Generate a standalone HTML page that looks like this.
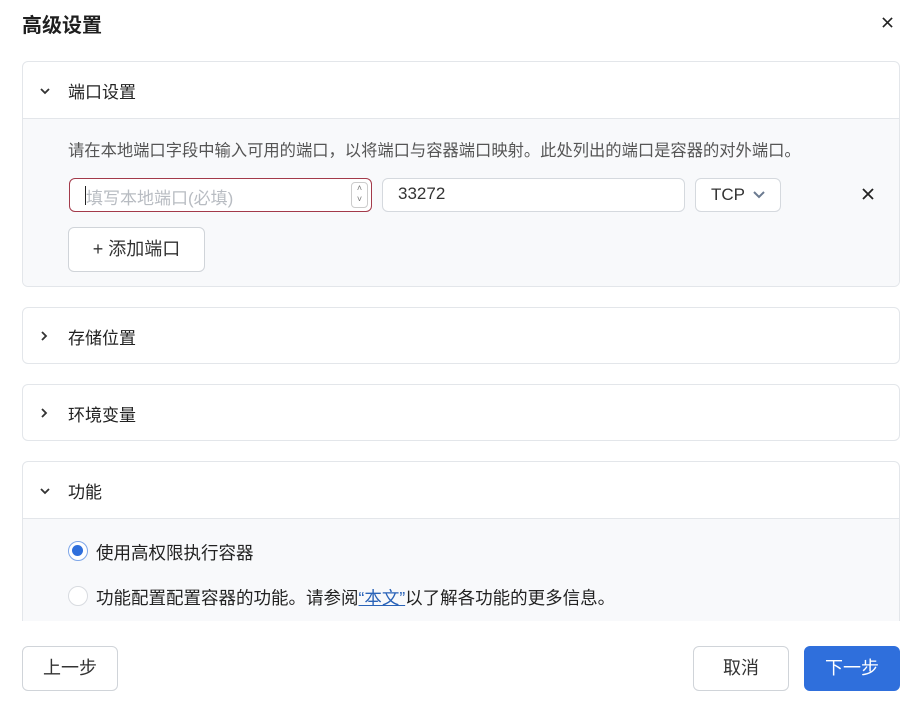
<!DOCTYPE html>
<html><head><meta charset="utf-8"><style>
*{box-sizing:border-box;margin:0;padding:0}
body{width:911px;height:704px;background:#fff;font-family:"Liberation Sans","Noto Sans CJK SC",sans-serif;color:#222;position:relative;overflow:hidden}
.abs{position:absolute}
.title{left:22px;top:9px;font-size:20px;font-weight:bold;color:#1f1f1f}
.panel{position:absolute;left:22px;width:878px;border:1px solid #e3e6ea;border-radius:6px;background:#fff;overflow:hidden}
.hd{height:56px;position:relative;font-size:17px}
.hd span{position:absolute;left:45px;top:16px}
.hd svg{position:absolute;left:16px;top:24px}
.bd{background:#f8f9fb;border-top:1px solid #e3e6ea;position:relative}
.inp{position:absolute;border:1px solid #d5d9de;border-radius:6px;background:#fff;height:34px;font-size:17px}
.btn{position:absolute;border:1px solid #d0d4d9;border-radius:6px;background:#fff;font-size:18px;text-align:center;line-height:42px;height:45px;color:#333}
</style></head><body>
<div class="abs title">高级设置</div>
<svg class="abs" style="left:882px;top:17px" width="11" height="11" viewBox="0 0 12 12"><path d="M1 1L11 11M11 1L1 11" stroke="#222" stroke-width="1.8"/></svg>

<div class="panel" style="top:61px;height:226px">
 <div class="hd"><svg width="12" height="10" viewBox="0 0 12 10"><path d="M2 3L6 7L10 3" fill="none" stroke="#333" stroke-width="1.8"/></svg><span>端口设置</span></div>
 <div class="bd" style="height:170px">
  <div class="abs" style="left:45px;top:18px;font-size:16.3px;color:#555;white-space:nowrap">请在本地端口字段中输入可用的端口，以将端口与容器端口映射。此处列出的端口是容器的对外端口。</div>
  <div class="inp" style="left:46px;top:59px;width:303px;border-color:#a33a4a;color:#b8bcc2;padding:5px 0 0 16px">填写本地端口(必填)
   <div class="abs" style="left:15px;top:7px;width:1px;height:19px;background:#222"></div>
   <div class="abs" style="right:3px;top:3px;width:17px;height:26px;border:1px solid #ccc;border-radius:4px;font-size:9px;line-height:11px;text-align:center;color:#777">˄<br>˅</div>
  </div>
  <div class="inp" style="left:359px;top:59px;width:303px;padding:5px 0 0 15px;color:#333">33272</div>
  <div class="inp" style="left:672px;top:59px;width:86px;padding:6px 0 0 15px;color:#333">TCP
   <svg class="abs" style="left:56px;top:11px" width="14" height="10" viewBox="0 0 14 10"><path d="M2 2L7 7L12 2" fill="none" stroke="#6b7a90" stroke-width="2"/></svg></div>
  <svg class="abs" style="left:839px;top:69px" width="12" height="12" viewBox="0 0 12 12"><path d="M1 1L11 11M11 1L1 11" stroke="#222" stroke-width="1.8"/></svg>
  <div class="btn" style="left:45px;top:108px;width:137px;font-size:18px;line-height:42px">+ 添加端口</div>
 </div>
</div>

<div class="panel" style="top:307px;height:57px"><div class="hd"><svg width="10" height="12" viewBox="0 0 10 12" style="top:22px"><path d="M3 2L7 6L3 10" fill="none" stroke="#333" stroke-width="1.8"/></svg><span>存储位置</span></div></div>
<div class="panel" style="top:384px;height:57px"><div class="hd"><svg width="10" height="12" viewBox="0 0 10 12" style="top:22px"><path d="M3 2L7 6L3 10" fill="none" stroke="#333" stroke-width="1.8"/></svg><span>环境变量</span></div></div>

<div class="panel" style="top:461px;height:180px">
 <div class="hd"><svg width="12" height="10" viewBox="0 0 12 10"><path d="M2 3L6 7L10 3" fill="none" stroke="#333" stroke-width="1.8"/></svg><span>功能</span></div>
 <div class="bd" style="height:124px">
  <div class="abs" style="left:45px;top:22px;width:20px;height:20px;border:1.5px solid #7ea6e8;border-radius:50%;background:#fff"><div style="margin:3px;width:11px;height:11px;border-radius:50%;background:#2f6fdc"></div></div>
  <div class="abs" style="left:73px;top:21px;font-size:17.5px">使用高权限执行容器</div>
  <div class="abs" style="left:45px;top:67px;width:20px;height:20px;border:1px solid #d8dbe0;border-radius:50%;background:#fff"></div>
  <div class="abs" style="left:73px;top:66px;font-size:17.5px;white-space:nowrap">功能配置配置容器的功能。请参阅<a style="color:#2a63b8;text-decoration:underline">“本文”</a>以了解各功能的更多信息。</div>
 </div>
</div>
<div class="abs" style="left:0;top:621px;width:911px;height:83px;background:#fff"></div>

<div class="btn" style="left:22px;top:646px;width:96px">上一步</div>
<div class="btn" style="left:693px;top:646px;width:96px">取消</div>
<div class="btn" style="left:804px;top:646px;width:96px;background:#2f6fdc;border-color:#2f6fdc;color:#fff">下一步</div>
</body></html>
